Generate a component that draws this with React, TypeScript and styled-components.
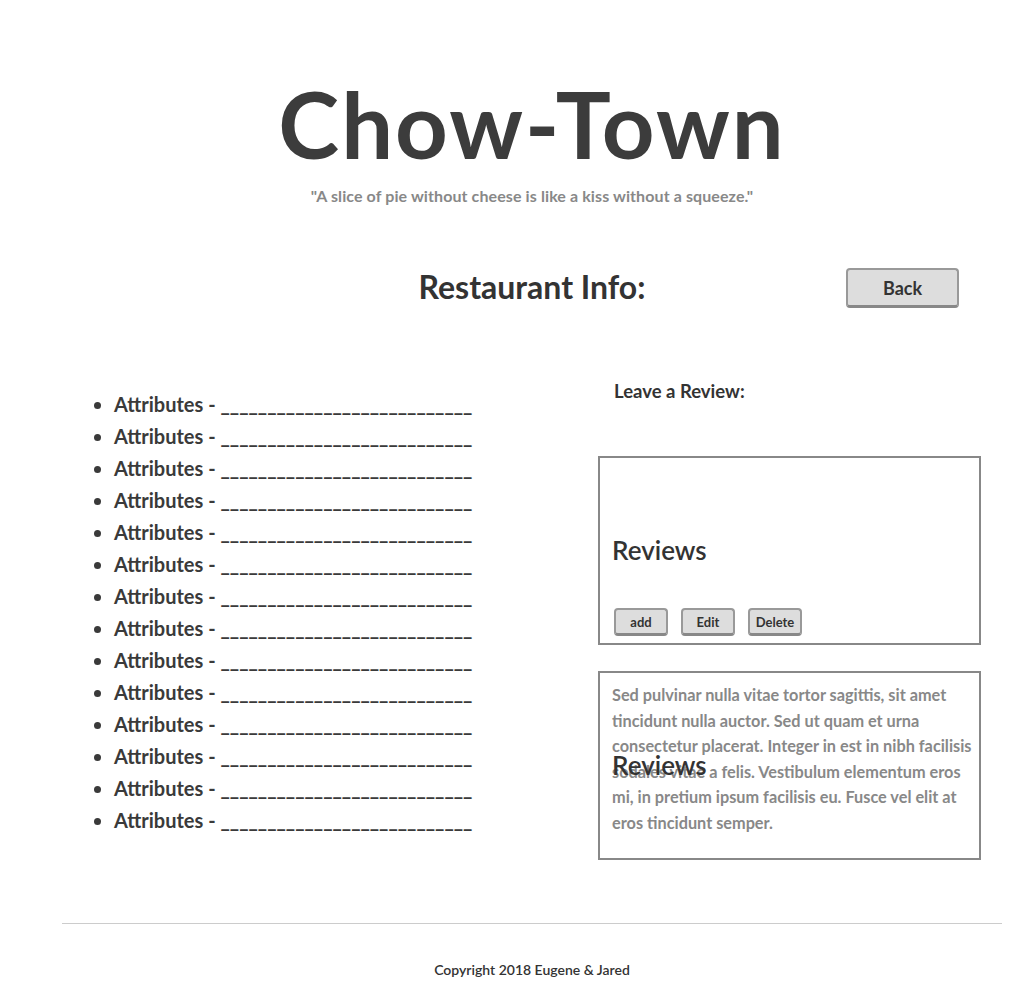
import React from "react";
import styled, { createGlobalStyle } from "styled-components";

const Global = createGlobalStyle`
  html, body { margin: 0; padding: 0; background: #fff; }
  body { font-family: Lato, "Open Sans", sans-serif; color: #333; }
`;

const Page = styled.div`
  width: 940px;
  margin-left: 62px;
  display: flex;
  flex-direction: column;
`;

const Header = styled.header`
  display: flex;
  flex-direction: column;
  align-items: center;
  padding-top: 72px;
`;

const Title = styled.h1`
  margin: 0;
  font-size: 92px;
  line-height: 104px;
  font-weight: 700;
  color: #3c3c3c;
  letter-spacing: 2px;
`;

const Quote = styled.p`
  margin: 10px 0 0;
  font-size: 16px;
  letter-spacing: 0.1px;
  font-weight: 700;
  color: #888;
`;

const InfoRow = styled.div`
  display: grid;
  grid-template-columns: 1fr auto 1fr;
  align-items: center;
  margin-top: 60px;
`;

const InfoTitle = styled.h2`
  grid-column: 2;
  margin: 0;
  font-size: 32px;
  font-weight: 700;
  color: #333;
`;

const Button = styled.button<{ $w: number; $h: number; $fs: number }>`
  width: ${(p) => p.$w}px;
  height: ${(p) => p.$h}px;
  font-family: Lato, sans-serif;
  font-size: ${(p) => p.$fs}px;
  font-weight: 700;
  color: #333;
  background: #ddd;
  border: 2px solid #999;
  border-bottom-width: 3px;
  border-bottom-color: #888;
  border-radius: 4px;
  padding: 0;
`;

const BackWrap = styled.div`
  grid-column: 3;
  justify-self: end;
  margin-right: 43px;
  padding-top: 3px;
`;

const Main = styled.main`
  display: grid;
  grid-template-columns: 536px 383px;
  margin-top: 60px;
`;

const AttrList = styled.ul`
  margin: 20px 0 0;
  padding-left: 52px;
  list-style: disc;
`;

const AttrItem = styled.li`
  font-size: 20px;
  font-weight: 700;
  line-height: 32px;
  color: #3a3a3a;
  white-space: nowrap;
`;

const ReviewCol = styled.section`
  display: flex;
  flex-direction: column;
`;

const LeaveTitle = styled.h3`
  margin: 12px 0 0 16px;
  font-size: 18.5px;
  font-weight: 700;
  color: #333;
`;

const Box = styled.div<{ $mt: number }>`
  position: relative;
  margin-top: ${(p) => p.$mt}px;
  height: 185px;
  border: 2px solid #888;
  box-sizing: content-box;
`;

const ReviewsTitle = styled.h4`
  margin: 0;
  font-size: 26px;
  font-weight: 600;
  color: #333;
`;

const FormBox = styled(Box)`
  display: flex;
  flex-direction: column;
  padding: 0 12px;
`;

const FormInner = styled.div`
  margin-top: 76px;
`;

const ButtonRow = styled.div`
  display: flex;
  gap: 13px;
  margin-top: 42px;
  padding-left: 2px;
`;

const ReviewText = styled.p`
  margin: 0;
  padding: 9px 0 0 12px;
  font-size: 16.3px;
  font-weight: 700;
  line-height: 25.6px;
  color: #888;
`;

const OverlayTitle = styled(ReviewsTitle)`
  position: absolute;
  left: 12px;
  top: 76px;
`;

const Footer = styled.footer`
  margin-top: 63px;
  border-top: 1px solid #ccc;
  display: flex;
  justify-content: center;
  padding: 37px 0 20px;
`;

const Copy = styled.p`
  margin: 0;
  font-size: 14px;
  font-weight: 600;
  color: #333;
`;

export default function App() {
  const attrs = Array.from({ length: 14 });
  return (
    <>
      <Global />
      <Page>
        <Header>
          <Title>Chow-Town</Title>
          <Quote>"A slice of pie without cheese is like a kiss without a squeeze."</Quote>
        </Header>
        <InfoRow>
          <InfoTitle>Restaurant Info:</InfoTitle>
          <BackWrap>
            <Button $w={113} $h={40} $fs={18}>Back</Button>
          </BackWrap>
        </InfoRow>
        <Main>
          <AttrList>
            {attrs.map((_, i) => (
              <AttrItem key={i}>Attributes - ___________________________</AttrItem>
            ))}
          </AttrList>
          <ReviewCol>
            <LeaveTitle>Leave a Review:</LeaveTitle>
            <FormBox $mt={54}>
              <FormInner>
                <ReviewsTitle>Reviews</ReviewsTitle>
              </FormInner>
              <ButtonRow>
                <Button $w={54} $h={28} $fs={13}>add</Button>
                <Button $w={54} $h={28} $fs={13}>Edit</Button>
                <Button $w={54} $h={28} $fs={13}>Delete</Button>
              </ButtonRow>
            </FormBox>
            <Box $mt={26}>
              <ReviewText>
                Sed pulvinar nulla vitae tortor sagittis, sit amet tincidunt nulla auctor. Sed ut quam et urna
                consectetur placerat. Integer in est in nibh facilisis sodales vitae a felis. Vestibulum elementum
                eros mi, in pretium ipsum facilisis eu. Fusce vel elit at eros tincidunt semper.
              </ReviewText>
              <OverlayTitle>Reviews</OverlayTitle>
            </Box>
          </ReviewCol>
        </Main>
        <Footer>
          <Copy>Copyright 2018 Eugene &amp; Jared</Copy>
        </Footer>
      </Page>
    </>
  );
}
